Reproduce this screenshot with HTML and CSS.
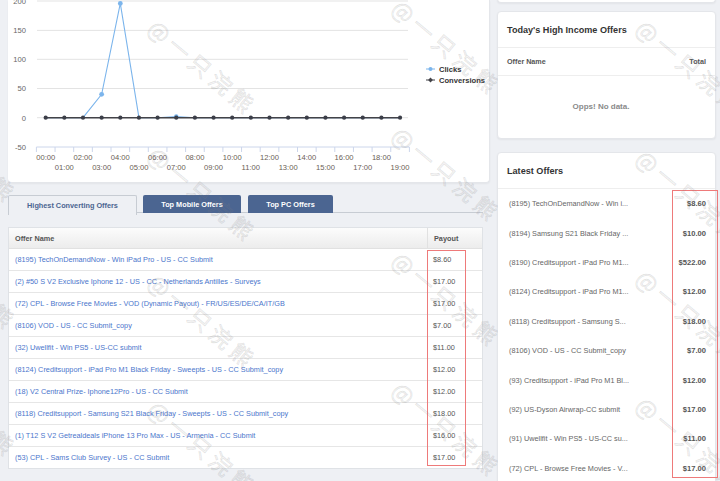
FILE: index.html
```html
<!DOCTYPE html>
<html lang="en">
<head>
<meta charset="utf-8">
<title>Dashboard</title>
<link rel="stylesheet" href="styles.css">
</head>
<body>
<div class="page">
  <main class="main">
    <section class="card chart-card">
      <svg class="chart" width="482" height="183" viewBox="0 0 482 183">
        <g class="grid">
          <line x1="29" y1="1" x2="400" y2="1"/>
          <line x1="29" y1="30.4" x2="400" y2="30.4"/>
          <line x1="29" y1="59.3" x2="400" y2="59.3"/>
          <line x1="29" y1="88.5" x2="400" y2="88.5"/>
          <line x1="29" y1="117.7" x2="400" y2="117.7"/>
        </g>
        <g class="ylabels">
          <text x="18" y="4">200</text>
          <text x="18" y="33">150</text>
          <text x="18" y="62">100</text>
          <text x="18" y="91">50</text>
          <text x="18" y="121">0</text>
          <text x="18" y="150">-50</text>
        </g>
        <line class="axis" x1="28.4" y1="147" x2="401.4" y2="147"/>
        <g class="ticks">
          <line x1="28.4" y1="147" x2="28.4" y2="152"/>
          <line x1="47.05" y1="147" x2="47.05" y2="152"/>
          <line x1="65.7" y1="147" x2="65.7" y2="152"/>
          <line x1="84.35" y1="147" x2="84.35" y2="152"/>
          <line x1="103" y1="147" x2="103" y2="152"/>
          <line x1="121.65" y1="147" x2="121.65" y2="152"/>
          <line x1="140.3" y1="147" x2="140.3" y2="152"/>
          <line x1="158.95" y1="147" x2="158.95" y2="152"/>
          <line x1="177.6" y1="147" x2="177.6" y2="152"/>
          <line x1="196.25" y1="147" x2="196.25" y2="152"/>
          <line x1="214.9" y1="147" x2="214.9" y2="152"/>
          <line x1="233.55" y1="147" x2="233.55" y2="152"/>
          <line x1="252.2" y1="147" x2="252.2" y2="152"/>
          <line x1="270.85" y1="147" x2="270.85" y2="152"/>
          <line x1="289.5" y1="147" x2="289.5" y2="152"/>
          <line x1="308.15" y1="147" x2="308.15" y2="152"/>
          <line x1="326.8" y1="147" x2="326.8" y2="152"/>
          <line x1="345.45" y1="147" x2="345.45" y2="152"/>
          <line x1="364.1" y1="147" x2="364.1" y2="152"/>
          <line x1="382.75" y1="147" x2="382.75" y2="152"/>
          <line x1="401.4" y1="147" x2="401.4" y2="152"/>
        </g>
        <g class="xlabels">
          <text x="37.7" y="160">00:00</text>
          <text x="56.35" y="170">01:00</text>
          <text x="75" y="160">02:00</text>
          <text x="93.65" y="170">03:00</text>
          <text x="112.3" y="160">04:00</text>
          <text x="130.95" y="170">05:00</text>
          <text x="149.6" y="160">06:00</text>
          <text x="168.25" y="170">07:00</text>
          <text x="186.9" y="160">08:00</text>
          <text x="205.55" y="170">09:00</text>
          <text x="224.2" y="160">10:00</text>
          <text x="242.85" y="170">11:00</text>
          <text x="261.5" y="160">12:00</text>
          <text x="280.15" y="170">13:00</text>
          <text x="298.8" y="160">14:00</text>
          <text x="317.45" y="170">15:00</text>
          <text x="336.1" y="160">16:00</text>
          <text x="354.75" y="170">17:00</text>
          <text x="373.4" y="160">18:00</text>
          <text x="392.05" y="170">19:00</text>
        </g>
        <polyline class="clicks" points="37.7,117.7 56.35,117.7 75,117.7 93.65,94.3 112.3,3.4 130.95,117.7 149.6,117.7 168.25,116.5 186.9,117.7 205.55,117.7 224.2,117.7 242.85,117.7 261.5,117.7 280.15,117.7 298.8,117.7 317.45,117.7 336.1,117.7 354.75,117.7 373.4,117.7 392.05,117.7"/>
        <g class="clicks-dots">
          <circle cx="93.65" cy="94.3" r="2.4"/>
          <circle cx="112.3" cy="3.4" r="2.4"/>
          <circle cx="168.25" cy="116.5" r="2.2"/>
        </g>
        <polyline class="conv" points="37.7,117.7 56.35,117.7 75,117.7 93.65,117.7 112.3,117.7 130.95,117.7 149.6,117.7 168.25,117.7 186.9,117.7 205.55,117.7 224.2,117.7 242.85,117.7 261.5,117.7 280.15,117.7 298.8,117.7 317.45,117.7 336.1,117.7 354.75,117.7 373.4,117.7 392.05,117.7"/>
        <g class="conv-dots">
          <circle cx="37.7" cy="117.7" r="2.1"/>
          <circle cx="56.35" cy="117.7" r="2.1"/>
          <circle cx="75" cy="117.7" r="2.1"/>
          <circle cx="93.65" cy="117.7" r="2.1"/>
          <circle cx="112.3" cy="117.7" r="2.1"/>
          <circle cx="130.95" cy="117.7" r="2.1"/>
          <circle cx="149.6" cy="117.7" r="2.1"/>
          <circle cx="168.25" cy="117.7" r="2.1"/>
          <circle cx="186.9" cy="117.7" r="2.1"/>
          <circle cx="205.55" cy="117.7" r="2.1"/>
          <circle cx="224.2" cy="117.7" r="2.1"/>
          <circle cx="242.85" cy="117.7" r="2.1"/>
          <circle cx="261.5" cy="117.7" r="2.1"/>
          <circle cx="280.15" cy="117.7" r="2.1"/>
          <circle cx="298.8" cy="117.7" r="2.1"/>
          <circle cx="317.45" cy="117.7" r="2.1"/>
          <circle cx="336.1" cy="117.7" r="2.1"/>
          <circle cx="354.75" cy="117.7" r="2.1"/>
          <circle cx="373.4" cy="117.7" r="2.1"/>
          <circle cx="392.05" cy="117.7" r="2.1"/>
        </g>
        <g class="legend">
          <line class="lg-clicks" x1="418" y1="69" x2="427" y2="69"/>
          <circle class="lg-clicks-dot" cx="422.5" cy="69" r="2"/>
          <text x="431" y="72">Clicks</text>
          <line class="lg-conv" x1="418" y1="80" x2="427" y2="80"/>
          <path class="lg-conv-dot" d="M422.5 77.6 L424.9 80 L422.5 82.4 L420.1 80 Z"/>
          <text x="431" y="83">Conversions</text>
        </g>
      </svg>
    </section>

    <nav class="tabs">
      <div class="tab active">Highest Converting Offers</div>
      <div class="tab">Top Mobile Offers</div>
      <div class="tab">Top PC Offers</div>
    </nav>

    <div class="table-wrap">
      <div class="offers">
        <div class="trow thead"><div class="c-name">Offer Name</div><div class="c-pay">Payout</div></div>
        <div class="trow"><div class="c-name link">(8195) TechOnDemandNow - Win iPad Pro - US - CC Submit</div><div class="c-pay">$8.60</div></div>
        <div class="trow"><div class="c-name link">(2) #50 S V2 Exclusive Iphone 12 - US - CC - Netherlands Antilles - Surveys</div><div class="c-pay">$17.00</div></div>
        <div class="trow"><div class="c-name link">(72) CPL - Browse Free Movies - VOD (Dynamic Payout) - FR/US/ES/DE/CA/IT/GB</div><div class="c-pay">$17.00</div></div>
        <div class="trow"><div class="c-name link">(8106) VOD - US - CC Submit_copy</div><div class="c-pay">$7.00</div></div>
        <div class="trow"><div class="c-name link">(32) Uwellfit - Win PS5 - US-CC submit</div><div class="c-pay">$11.00</div></div>
        <div class="trow"><div class="c-name link">(8124) Creditsupport - iPad Pro M1 Black Friday - Sweepts - US - CC Submit_copy</div><div class="c-pay">$12.00</div></div>
        <div class="trow"><div class="c-name link">(18) V2 Central Prize- Iphone12Pro - US - CC Submit</div><div class="c-pay">$12.00</div></div>
        <div class="trow"><div class="c-name link">(8118) Creditsupport - Samsung S21 Black Friday - Sweepts - US - CC Submit_copy</div><div class="c-pay">$18.00</div></div>
        <div class="trow"><div class="c-name link">(1) T12 S V2 Getrealdeals iPhone 13 Pro Max - US - Armenia - CC Submit</div><div class="c-pay">$16.00</div></div>
        <div class="trow last"><div class="c-name link">(53) CPL - Sams Club Survey - US - CC Submit</div><div class="c-pay">$17.00</div></div>
      </div>
      <div class="mark mark-table"></div>
    </div>
  </main>

  <aside class="side">
    <div class="card stub"></div>

    <section class="card income">
      <h2 class="card-title">Today's High Income Offers</h2>
      <div class="income-head"><span>Offer Name</span><span>Total</span></div>
      <div class="nodata">Opps! No data.</div>
    </section>

    <section class="card latest">
      <h2 class="card-title">Latest Offers</h2>
      <ul class="latest-list">
        <li><span class="lname">(8195) TechOnDemandNow - Win i...</span><span class="lprice">$8.60</span></li>
        <li><span class="lname">(8194) Samsung S21 Black Friday ...</span><span class="lprice">$10.00</span></li>
        <li><span class="lname">(8190) Creditsupport - iPad Pro M1...</span><span class="lprice">$522.00</span></li>
        <li><span class="lname">(8124) Creditsupport - iPad Pro M1...</span><span class="lprice">$12.00</span></li>
        <li><span class="lname">(8118) Creditsupport - Samsung S...</span><span class="lprice">$18.00</span></li>
        <li><span class="lname">(8106) VOD - US - CC Submit_copy</span><span class="lprice">$7.00</span></li>
        <li><span class="lname">(93) Creditsupport - iPad Pro M1 Bl...</span><span class="lprice">$12.00</span></li>
        <li><span class="lname">(92) US-Dyson Airwrap-CC submit</span><span class="lprice">$17.00</span></li>
        <li><span class="lname">(91) Uwellfit - Win PS5 - US-CC su...</span><span class="lprice">$11.00</span></li>
        <li><span class="lname">(72) CPL - Browse Free Movies - V...</span><span class="lprice">$17.00</span></li>
      </ul>
      <div class="mark mark-latest"></div>
    </section>
  </aside>

  <div class="watermarks" aria-hidden="true">
    <span class="wm" style="left:-90px;top:105px">@一只浣熊</span>
    <span class="wm" style="left:-90px;top:232px">@一只浣熊</span>
    <span class="wm" style="left:-90px;top:359px">@一只浣熊</span>
    <span class="wm" style="left:150px;top:17px">@一只浣熊</span>
    <span class="wm" style="left:150px;top:144px">@一只浣熊</span>
    <span class="wm" style="left:150px;top:271px">@一只浣熊</span>
    <span class="wm" style="left:150px;top:398px">@一只浣熊</span>
    <span class="wm" style="left:394px;top:-3px">@一只浣熊</span>
    <span class="wm" style="left:394px;top:124px">@一只浣熊</span>
    <span class="wm" style="left:394px;top:249px">@一只浣熊</span>
    <span class="wm" style="left:394px;top:379px">@一只浣熊</span>
    <span class="wm" style="left:638px;top:17px">@一只浣熊</span>
    <span class="wm" style="left:638px;top:147px">@一只浣熊</span>
    <span class="wm" style="left:638px;top:267px">@一只浣熊</span>
    <span class="wm" style="left:638px;top:394px">@一只浣熊</span>
  </div>
</div>
</body>
</html>
```

FILE: styles.css
```css
html, body {
  margin: 0;
  padding: 0;
  height: 481px;
  overflow: hidden;
}

body {
  background: #eef0f4;
  font-family: "Liberation Sans", Arial, sans-serif;
  color: #555;
}

.page {
  position: relative;
  display: flex;
  gap: 7px;
  padding: 0 4px 0 8px;
  height: 481px;
  overflow: hidden;
}

.card {
  background: #fff;
  border: 1px solid #e4e6ea;
  border-radius: 4px;
  box-shadow: 0 1px 2px rgba(0, 0, 0, 0.05);
  box-sizing: border-box;
}

/* ---------- left column ---------- */
.main {
  width: 482px;
  flex: none;
}

.chart-card {
  height: 183px;
  border-top: none;
  border-radius: 0 0 4px 4px;
  border-left: none;
  overflow: hidden;
}

.chart {
  display: block;
  font-family: "Liberation Sans", Arial, sans-serif;
}

.grid line {
  stroke: #e3e3e3;
  stroke-width: 1;
}

.axis {
  stroke: #ccd6eb;
  stroke-width: 1;
}

.ticks line {
  stroke: #ccd6eb;
  stroke-width: 1;
}

.ylabels text {
  font-size: 7.6px;
  fill: #666;
  text-anchor: end;
}

.xlabels text {
  font-size: 7.6px;
  fill: #6a6055;
  text-anchor: middle;
}

.clicks {
  fill: none;
  stroke: #7cb5ec;
  stroke-width: 1.1;
}

.clicks-dots circle {
  fill: #7cb5ec;
}

.conv {
  fill: none;
  stroke: #434348;
  stroke-width: 1.6;
}

.conv-dots circle {
  fill: #3b3e48;
}

.lg-clicks {
  stroke: #7cb5ec;
  stroke-width: 1.2;
}

.lg-clicks-dot {
  fill: #7cb5ec;
}

.lg-conv {
  stroke: #434348;
  stroke-width: 1.2;
}

.lg-conv-dot {
  fill: #434348;
}

.legend text {
  font-size: 7.6px;
  font-weight: bold;
  fill: #333;
}

/* tabs */
.tabs {
  display: flex;
  gap: 6px;
  margin-top: 12px;
  width: 475px;
  height: 18px;
  box-sizing: border-box;
  border-bottom: 1.5px solid #c7ccd3;
}

.tab {
  height: 18px;
  box-sizing: border-box;
  padding: 0 11px;
  display: flex;
  align-items: center;
  justify-content: center;
  font-size: 7.3px;
  font-weight: bold;
  color: #fff;
  background: #4b6591;
  border-radius: 2px 2px 0 0;
}

.tab:nth-child(2) {
  width: 98px;
  padding: 0;
}

.tab:nth-child(3) {
  width: 85px;
  padding: 0;
  margin-left: 1px;
}

.tab.active {
  width: 129px;
  padding: 0;
  color: #4b6591;
  background: #eef0f4;
  border: 1px solid #c7ccd3;
  border-bottom: none;
  height: 19.5px;
  margin-bottom: -1.5px;
}

/* offers table */
.table-wrap {
  position: relative;
  margin-top: 14px;
  width: 475px;
}

.offers {
  border: 1px solid #dfe2e6;
  background: #fff;
}

.trow {
  display: grid;
  grid-template-columns: 1fr 55px;
  height: 22px;
  box-sizing: border-box;
  border-bottom: 1px solid #e6e6e6;
  font-size: 7.3px;
}

.trow.last {
  border-bottom: none;
  height: 21px;
}

.trow > div {
  display: flex;
  align-items: center;
  padding-left: 6px;
  white-space: nowrap;
  overflow: hidden;
}

.thead {
  height: 21px;
  background: linear-gradient(#fcfcfc, #ececec);
  font-weight: bold;
  color: #555;
  border-bottom: 1px solid #e1e1e1;
}

.thead .c-pay {
  border-left: 1px solid #e1e1e1;
}

.link {
  color: #4b76cc;
}

.c-pay {
  color: #555;
}

.mark {
  position: absolute;
  border: 1px solid #ee7a7a;
  box-sizing: border-box;
  pointer-events: none;
}

.mark-table {
  left: 419px;
  top: 23px;
  width: 39px;
  height: 216px;
}

/* ---------- right column ---------- */
.side {
  width: 219px;
  flex: none;
}

.stub {
  height: 4px;
  border-top: none;
  border-radius: 0 0 4px 4px;
  margin-top: -1px;
}

.income {
  margin-top: 8px;
  height: 128px;
}

.card-title {
  margin: 0;
  height: 36px;
  box-sizing: border-box;
  padding-left: 9px;
  display: flex;
  align-items: center;
  font-size: 9.1px;
  font-weight: bold;
  color: #333;
  border-bottom: 1px solid #eeeeee;
}

.income-head {
  display: flex;
  justify-content: space-between;
  align-items: center;
  height: 28px;
  box-sizing: border-box;
  padding: 0 9px;
  border-bottom: 1px solid #eeeeee;
  font-size: 7.2px;
  font-weight: bold;
  color: #555;
}

.nodata {
  height: 61px;
  display: flex;
  align-items: center;
  justify-content: center;
  padding-right: 11px;
  font-size: 8px;
  font-weight: bold;
  color: #8a8a8a;
}

.latest {
  position: relative;
  margin-top: 13px;
  height: 340px;
}

.latest-list {
  list-style: none;
  margin: 0;
  padding: 0;
}

.latest-list li {
  height: 29.4px;
  display: flex;
  align-items: center;
  justify-content: space-between;
  padding: 0 9px 0 11px;
}

.lname {
  font-size: 7.3px;
  color: #666;
  white-space: nowrap;
}

.lprice {
  font-size: 7.6px;
  font-weight: bold;
  color: #555;
}

.mark-latest {
  left: 174px;
  top: 37px;
  width: 46px;
  height: 288px;
}

/* watermarks overlay */
.watermarks {
  position: absolute;
  inset: 0;
  pointer-events: none;
  z-index: 5;
}

.wm {
  position: absolute;
  font-family: "Noto Sans CJK SC", sans-serif;
  font-size: 22px;
  line-height: 26px;
  letter-spacing: 5px;
  color: rgba(120, 120, 120, 0.06);
  -webkit-text-stroke: 0.7px rgba(130, 130, 130, 0.22);
  transform: rotate(40deg);
  transform-origin: 10px 13px;
  white-space: nowrap;
}
```
